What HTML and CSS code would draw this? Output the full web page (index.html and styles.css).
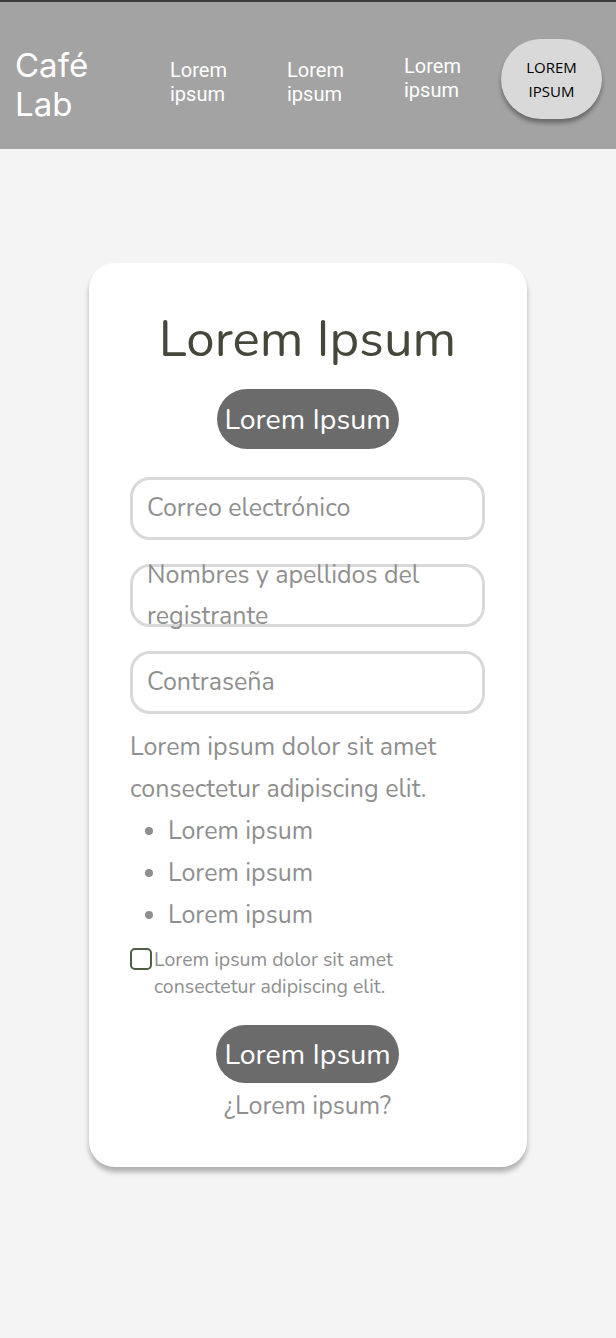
FILE: index.html
```html
<!DOCTYPE html>
<html lang="es">
<head>
<meta charset="utf-8">
<title>Café Lab</title>
<link rel="stylesheet" href="styles.css">
</head>
<body>
<header class="topbar">
  <div class="brand">Café<br>Lab</div>
  <nav class="nav">
    <a class="nav-link">Lorem<br>ipsum</a>
    <a class="nav-link">Lorem<br>ipsum</a>
    <a class="nav-link nav-link-up">Lorem<br>ipsum</a>
  </nav>
  <button class="nav-cta">LOREM<br>IPSUM</button>
</header>
<main class="main">
  <section class="card">
    <h1 class="title">Lorem Ipsum</h1>
    <button class="pill pill-top">Lorem Ipsum</button>
    <div class="field"><span class="placeholder">Correo electrónico</span></div>
    <div class="field field-wrap"><span class="placeholder">Nombres y apellidos del registrante</span></div>
    <div class="field"><span class="placeholder">Contraseña</span></div>
    <p class="text">Lorem ipsum dolor sit amet consectetur adipiscing elit.</p>
    <ul class="list">
      <li>Lorem ipsum</li>
      <li>Lorem ipsum</li>
      <li>Lorem ipsum</li>
    </ul>
    <label class="check">
      <span class="box"></span>
      <span class="check-text">Lorem ipsum dolor sit amet consectetur adipiscing elit.</span>
    </label>
    <button class="pill pill-bottom">Lorem Ipsum</button>
    <a class="link">¿Lorem ipsum?</a>
  </section>
</main>
</body>
</html>
```
FILE: styles.css
```css
* { box-sizing: border-box; }
html, body { margin: 0; padding: 0; }
body {
  background: #f4f4f4;
  font-family: "Nunito", "Lato", "Noto Sans", sans-serif;
  width: 616px;
  min-height: 1338px;
}
.topbar {
  height: 149px;
  background: #a3a3a3;
  border-top: 2px solid #3c3c3c;
  display: flex;
  align-items: center;
  padding: 0 14px 0 15px;
  font-family: "Inter", "Roboto", sans-serif;
  color: #fff;
}
.brand {
  flex: none;
  font-size: 33px;
  line-height: 39px;
  font-weight: 400;
  width: 155px;
  margin-top: 18px;
}
.nav {
  display: flex;
  flex: 1;
  min-width: 0;
  align-items: center;
}
.nav-link {
  flex: none;
  font-family: "Roboto", sans-serif;
  font-size: 20px;
  line-height: 24px;
  width: 117px;
  margin-top: 12px;
}
.nav-link:last-child { width: auto; }
.nav-link-up { margin-top: 4px; }
.nav-cta {
  flex: none;
  width: 101px;
  height: 80px;
  border: none;
  border-radius: 40px;
  background: #d9d9d9;
  box-shadow: 0 4px 4px rgba(0,0,0,0.35);
  font-family: "Open Sans", "Noto Sans", sans-serif;
  font-size: 15px;
  line-height: 24px;
  color: #000;
  margin-top: 7px;
  padding: 0;
}
.main {
  display: flex;
  justify-content: center;
  padding: 114px 0 0 0;
}
.card {
  width: 438px;
  background: #fff;
  border-radius: 26px;
  box-shadow: 0 5px 5px rgba(0,0,0,0.28);
  padding: 44px 42px 44px 41px;
  display: flex;
  flex-direction: column;
  align-items: center;
  color: #8f8f8f;
}
.title {
  margin: 0;
  font-size: 51px;
  font-weight: 400;
  line-height: 64px;
  color: #45473a;
}
.pill {
  border: none;
  background: #6b6b6b;
  color: #fff;
  font-family: inherit;
  font-size: 28.5px;
  border-radius: 30px;
  padding: 0;
}
.pill-top { width: 182px; height: 60px; margin-top: 18px; }
.field {
  align-self: stretch;
  height: 63px;
  border: 3px solid #d9d9d9;
  border-radius: 20px;
  padding: 0 14px;
  display: flex;
  align-items: center;
  font-size: 25px;
  line-height: 41px;
  margin-top: 24px;
  overflow: visible;
}
.pill-top + .field { margin-top: 28px; }
.field-wrap { padding-right: 40px; }
.placeholder { color: #8f8f8f; }
.text {
  align-self: stretch;
  margin: 12px 0 0;
  font-size: 25px;
  line-height: 42px;
}
.list {
  align-self: stretch;
  margin: 0;
  padding-left: 38px;
  font-size: 25px;
  line-height: 42px;
}
.check {
  align-self: stretch;
  display: flex;
  align-items: flex-start;
  margin-top: 12px;
}
.box {
  flex: none;
  width: 22px;
  height: 22px;
  border: 2.5px solid #4e5e44;
  border-radius: 5px;
}
.check-text {
  font-size: 19.5px;
  line-height: 27px;
  margin-top: -2px;
  margin-left: 2px;
  padding-right: 60px;
}
.pill-bottom { width: 183px; height: 58px; margin-top: 25px; }
.link {
  margin-top: 6px;
  font-size: 25px;
  line-height: 34px;
  color: #8f8f8f;
}
```
